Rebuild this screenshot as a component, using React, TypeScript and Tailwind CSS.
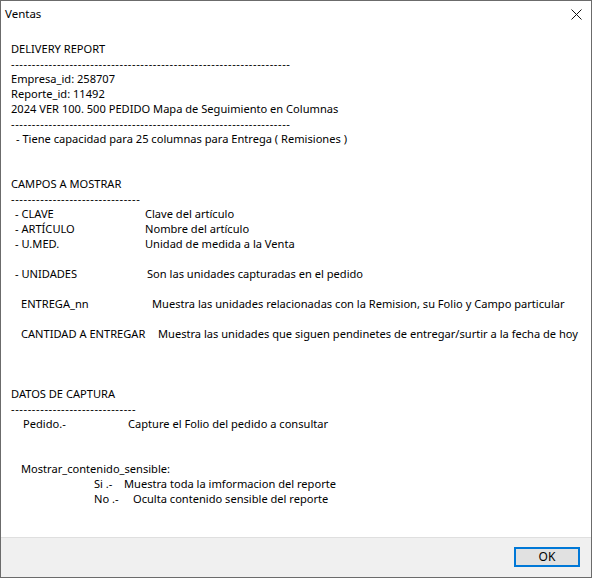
import React from "react";

const Dashes: React.FC<{ count: number }> = ({ count }) => (
    <div className="h-[15px] leading-[15px] whitespace-nowrap tracking-[0.6px]">{"-".repeat(count)}</div>
);

const Line: React.FC<{ children?: React.ReactNode; className?: string }> = ({ children, className = "" }) => (
    <div className={`h-[15px] leading-[15px] whitespace-nowrap flex ${className}`}>{children}</div>
);

const Row: React.FC<{ indent: string; col: string; label: string; text: string }> = ({ indent, col, label, text }) => (
    <Line className={indent}>
        <span className={`shrink-0 ${col}`}>{label}</span>
        <span>{text}</span>
    </Line>
);

const App: React.FC = () => {
    return (
        <div className="w-[592px] h-[578px] border border-[#6b6b6b] bg-white flex flex-col text-[11.1px] text-black font-['Segoe_UI','Noto_Sans',sans-serif]">
            {/* barra de titulo */}
            <div className="h-[26px] shrink-0 flex items-center justify-between pl-[4px] pr-[9px] text-[11.5px]">
                <span className="leading-none">Ventas</span>
                <svg width="11" height="11" viewBox="0 0 11 11" className="mt-[1px]">
                    <path d="M0.5 0.5 L10.5 10.5 M10.5 0.5 L0.5 10.5" stroke="#111" strokeWidth="1" />
                </svg>
            </div>

            {/* contenido */}
            <div className="flex-1 pl-[10px] pt-[14px]">
                <Line>DELIVERY REPORT</Line>
                <Dashes count={67} />
                <Line>Empresa_id: 258707</Line>
                <Line>Reporte_id: 11492</Line>
                <Line>2024 VER 100. 500 PEDIDO Mapa de Seguimiento en Columnas</Line>
                <Dashes count={67} />
                <Line className="pl-[5px]">- Tiene capacidad para 25 columnas para Entrega ( Remisiones )</Line>
                <Line />
                <Line />
                <Line>CAMPOS A MOSTRAR</Line>
                <Dashes count={31} />
                <Row indent="pl-[4px]" col="w-[130px]" label="- CLAVE" text="Clave del artículo" />
                <Row indent="pl-[4px]" col="w-[130px]" label="- ARTÍCULO" text="Nombre del artículo" />
                <Row indent="pl-[4px]" col="w-[130px]" label="- U.MED." text="Unidad de medida a la Venta" />
                <Line />
                <Row indent="pl-[4px]" col="w-[132px]" label="- UNIDADES" text="Son las unidades capturadas en el pedido" />
                <Line />
                <Row
                    indent="pl-[10px]"
                    col="w-[131px]"
                    label="ENTREGA_nn"
                    text="Muestra las unidades relacionadas con la Remision, su Folio y Campo particular"
                />
                <Line />
                <Row
                    indent="pl-[10px]"
                    col="w-[137px]"
                    label="CANTIDAD A ENTREGAR"
                    text="Muestra las unidades que siguen pendinetes de entregar/surtir a la fecha de hoy"
                />
                <Line />
                <Line />
                <Line />
                <Line>DATOS DE CAPTURA</Line>
                <Dashes count={30} />
                <Row indent="pl-[12px]" col="w-[105px]" label="Pedido.-" text="Capture el Folio del pedido a consultar" />
                <Line />
                <Line />
                <Line className="pl-[10px]">Mostrar_contenido_sensible:</Line>
                <Row indent="pl-[83px]" col="w-[30px]" label="Si .-" text="Muestra toda la imformacion del reporte" />
                <Row indent="pl-[83px]" col="w-[39px]" label="No .-" text="Oculta contenido sensible del reporte" />
            </div>

            {/* pie */}
            <div className="h-[40px] shrink-0 bg-[#f0f0f0] border-t border-[#dfdfdf] flex justify-end pt-[9px] pr-[11px]">
                <button className="w-[66px] h-[20px] bg-[#e1e1e1] border-2 border-[#0078d7] text-[12px] leading-none">
                    OK
                </button>
            </div>
        </div>
    );
};

export default App;
